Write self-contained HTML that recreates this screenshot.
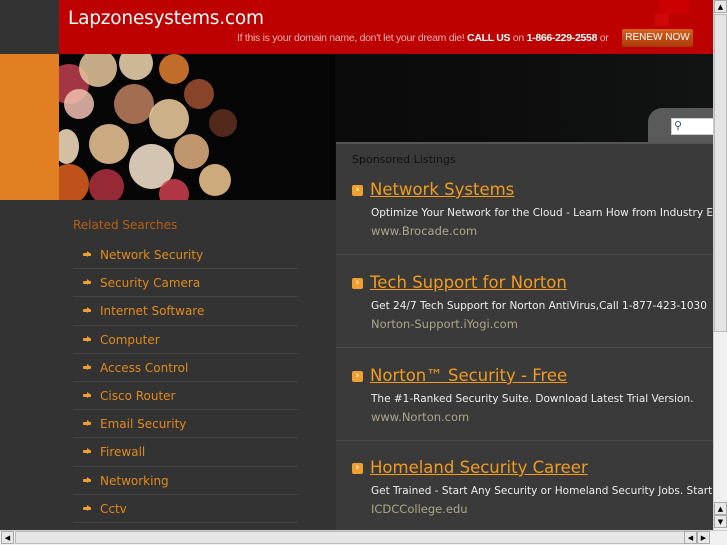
<!DOCTYPE html>
<html><head><style>
*{margin:0;padding:0;box-sizing:border-box}
body{width:727px;height:545px;overflow:hidden;background:#333;font-family:"DejaVu Sans","Liberation Sans",sans-serif;position:relative}
.abs{position:absolute}
#hdr{left:59px;top:0;width:654px;height:54px;background:#bd0000}
#hdr h1{position:absolute;left:9px;top:8px;font:18.5px "DejaVu Sans",sans-serif;color:#fff;font-weight:normal;letter-spacing:-0.2px}
#hdr .msg{position:absolute;left:178px;top:32px;font:10.5px "Liberation Sans",sans-serif;color:#f0b0b0;letter-spacing:-0.3px}
#hdr .msg b{color:#fff}
#renew{position:absolute;left:563px;top:29px;width:71px;height:18px;background:linear-gradient(#d8601c,#a83a08);color:#fff;font:10px "Liberation Sans",sans-serif;text-align:center;line-height:18px;border-radius:2px}
#banner{left:59px;top:54px;width:654px;height:146px;background:linear-gradient(90deg,#050505 0%,#0a0a0a 40%,#0d0d0d 70%,#121414 100%)}
#bokeh{left:59px;top:54px;width:276px;height:146px;overflow:hidden;background:#050505}
.c{position:absolute;border-radius:50%;opacity:.85}
#side{left:0;top:54px;width:59px;height:146px;background:#e17f22}
#rel{left:73px;top:218px;color:#b85f14;font-size:12px}
ul{position:absolute;left:73px;top:241px;width:225px;list-style:none}
li{height:28.2px;border-bottom:1px solid #444;color:#e08a1e;font-size:12px;line-height:28px;padding-left:27px;position:relative}
li:before{content:"";position:absolute;left:10px;top:12px;width:8px;height:3px;background:#f0a030;border-radius:1px}
li:after{content:"";position:absolute;left:14px;top:10px;border:3.5px solid transparent;border-left:4px solid #f0a030}
#tab{left:648px;top:108px;width:70px;height:40px;background:#5a5a5a;border-radius:14px 0 0 0}
#search{left:671px;top:118px;width:45px;height:17px;background:#fff;border:1px solid #ccc}
#panel{left:336px;top:142px;width:377px;height:388px;background:#3a3a3a;border-top:2px solid #555}
#sp{left:352px;top:153px;color:#111;font-size:11px}
.item{position:absolute;left:0;width:377px;height:93px}
.item.s:after{content:"";position:absolute;left:0;top:110px;width:377px;height:1px;background:#4a4a4a}
.item .ic{position:absolute;left:16px;top:41px;width:11px;height:11px;background:#f0a030;border-radius:2px;color:#fff;font-size:9px;line-height:11px;text-align:center;font-weight:bold}
.item a{position:absolute;left:34px;top:36px;color:#f29c1f;font-size:16.5px;text-decoration:underline;white-space:nowrap}
.item .d{position:absolute;left:35px;top:63px;color:#eee;font-size:10.5px;white-space:nowrap}
.item .u{position:absolute;left:35px;top:80px;color:#b0a58a;font-size:11.5px;white-space:nowrap}
#vs{left:713px;top:0;width:14px;height:530px;background:#f0f0f0;border-left:1px solid #ccc}
#hs{left:0;top:530px;width:727px;height:15px;background:#f0f0f0;border-top:1px solid #ccc}
.btn{position:absolute;width:13px;height:13px;background:#e8e8e8;border:1px solid #aaa;font-size:7px;text-align:center;line-height:12px;color:#000}
</style></head><body>
<div id="hdr" class="abs"><h1>Lapzonesystems.com</h1>
<div style="position:absolute;left:600px;top:0;width:30px;height:14px;background:#cc0000"></div>
<div style="position:absolute;left:596px;top:14px;width:14px;height:12px;background:#cc0808"></div>
<div class="msg">If this is your domain name, don't let your dream die! <b>CALL US</b> on <b>1-866-229-2558</b> or</div>
<div id="renew">RENEW NOW</div></div>
<div id="side" class="abs"></div>
<div id="banner" class="abs"></div>
<div id="bokeh" class="abs">
<div class="c" style="left:-10px;top:10px;width:40px;height:40px;background:#c04050"></div>
<div class="c" style="left:20px;top:-5px;width:38px;height:38px;background:#e8c8a0"></div>
<div class="c" style="left:60px;top:-8px;width:34px;height:34px;background:#f0d8b0"></div>
<div class="c" style="left:100px;top:0px;width:30px;height:30px;background:#e08030"></div>
<div class="c" style="left:5px;top:35px;width:30px;height:30px;background:#f0c0b0"></div>
<div class="c" style="left:55px;top:30px;width:40px;height:40px;background:#c08060"></div>
<div class="c" style="left:90px;top:45px;width:40px;height:40px;background:#f0d0a0"></div>
<div class="c" style="left:125px;top:25px;width:30px;height:30px;background:#a05030"></div>
<div class="c" style="left:-5px;top:75px;width:25px;height:35px;background:#f8e0c0"></div>
<div class="c" style="left:30px;top:70px;width:40px;height:40px;background:#f0c898"></div>
<div class="c" style="left:70px;top:90px;width:45px;height:45px;background:#f8e8d0"></div>
<div class="c" style="left:115px;top:80px;width:35px;height:35px;background:#e0b080"></div>
<div class="c" style="left:140px;top:110px;width:32px;height:32px;background:#f0c890"></div>
<div class="c" style="left:-10px;top:110px;width:40px;height:40px;background:#e06020"></div>
<div class="c" style="left:30px;top:115px;width:35px;height:35px;background:#b03040"></div>
<div class="c" style="left:100px;top:125px;width:30px;height:30px;background:#d04050"></div>
<div class="c" style="left:150px;top:55px;width:28px;height:28px;background:#603020"></div>
</div>
<div id="tab" class="abs"></div>
<div id="search" class="abs"><span style="font-size:11px;color:#357;position:absolute;left:2px;top:0">&#9906;</span></div>
<div id="rel" class="abs">Related Searches</div>
<ul><li>Network Security</li><li>Security Camera</li><li>Internet Software</li><li>Computer</li><li>Access Control</li><li>Cisco Router</li><li>Email Security</li><li>Firewall</li><li>Networking</li><li>Cctv</li></ul>
<div id="panel" class="abs">
<div class="item s" style="top:0px"><div class="ic">›</div><a>Network Systems</a><div class="d">Optimize Your Network for the Cloud - Learn How from Industry Experts</div><div class="u">www.Brocade.com</div></div>
<div class="item s" style="top:93px"><div class="ic">›</div><a>Tech Support for Norton</a><div class="d">Get 24/7 Tech Support for Norton AntiVirus,Call 1-877-423-1030</div><div class="u">Norton-Support.iYogi.com</div></div>
<div class="item s" style="top:186px"><div class="ic">›</div><a>Norton™ Security - Free</a><div class="d">The #1-Ranked Security Suite. Download Latest Trial Version.</div><div class="u">www.Norton.com</div></div>
<div class="item" style="top:278px"><div class="ic">›</div><a>Homeland Security Career</a><div class="d">Get Trained - Start Any Security or Homeland Security Jobs. Start Now</div><div class="u">ICDCCollege.edu</div></div>
</div>
<div id="sp" class="abs">Sponsored Listings</div>
<div id="vs" class="abs">
<div class="btn" style="left:0;top:0">▲</div>
<div style="position:absolute;left:0;top:14px;width:13px;height:318px;background:#e4e4e4;border:1px solid #bbb"></div>
<div class="btn" style="left:0;top:502px">▲</div><div class="btn" style="left:0;top:515px">▼</div></div>
<div id="hs" class="abs">
<div class="btn" style="left:1px;top:0">◀</div>
<div style="position:absolute;left:15px;top:0;width:690px;height:13px;background:#e6e6e6;border:1px solid #bbb"></div>
<div class="btn" style="left:684px;top:0">◀</div><div class="btn" style="left:697px;top:0">▶</div></div>
</body></html>
